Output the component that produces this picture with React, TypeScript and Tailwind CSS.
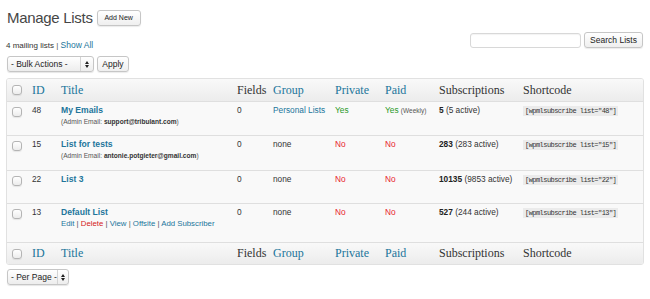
import React from "react";

const sans = "font-['Liberation_Sans',Arial,sans-serif]";
const serif = "font-['Liberation_Serif','Times_New_Roman',serif]";

function Check() {
  return (
    <span className="block w-[10px] h-[10px] rounded-[3px] border border-[#b4b4b4] bg-gradient-to-b from-white to-[#ececec] shadow-[0_1px_1px_rgba(0,0,0,0.08)]" />
  );
}

function SelectBox({ label, width }: { label: string; width: string }) {
  return (
    <div
      className={`${width} h-[16px] flex items-stretch rounded-[3px] border border-[#c6c6c6] bg-gradient-to-b from-white to-[#ededed] shadow-[0_1px_1px_rgba(0,0,0,0.1)] text-[8.5px] text-[#222]`}
    >
      <span className="flex-1 flex items-center pl-[3px] whitespace-nowrap">{label}</span>
      <span className="w-[13px] border-l border-[#d4d4d4] flex flex-col items-center justify-center gap-[1px]">
        <span className="block w-0 h-0 border-l-[2.5px] border-r-[2.5px] border-b-[3px] border-l-transparent border-r-transparent border-b-[#222]" />
        <span className="block w-0 h-0 border-l-[2.5px] border-r-[2.5px] border-t-[3px] border-l-transparent border-r-transparent border-t-[#222]" />
      </span>
    </div>
  );
}

function Btn({ children, className = "" }: { children: React.ReactNode; className?: string }) {
  return (
    <div
      className={`h-[16px] flex items-center justify-center rounded-[3px] border border-[#c6c6c6] bg-gradient-to-b from-white to-[#efefef] shadow-[0_1px_1px_rgba(0,0,0,0.08)] text-[#222] ${className}`}
    >
      {children}
    </div>
  );
}

type Row = {
  id: string;
  title: string;
  sub?: React.ReactNode;
  group: React.ReactNode;
  priv: boolean;
  paid: boolean;
  subs: string;
  active: string;
  code: string;
  h: string;
};

const rows: Row[] = [
  {
    id: "48",
    title: "My Emails",
    sub: (
      <span>
        (Admin Email: <b className="text-[#333]">support@tribulant.com</b>)
      </span>
    ),
    group: <span className="text-[#21759b]">Personal Lists</span>,
    priv: true,
    paid: true,
    subs: "5",
    active: "(5 active)",
    code: '[wpmlsubscribe list="48"]',
    h: "h-[34px]",
  },
  {
    id: "15",
    title: "List for tests",
    sub: (
      <span>
        (Admin Email: <b className="text-[#333]">antonie.potgieter@gmail.com</b>)
      </span>
    ),
    group: "none",
    priv: false,
    paid: false,
    subs: "283",
    active: "(283 active)",
    code: '[wpmlsubscribe list="15"]',
    h: "h-[35px]",
  },
  {
    id: "22",
    title: "List 3",
    group: "none",
    priv: false,
    paid: false,
    subs: "10135",
    active: "(9853 active)",
    code: '[wpmlsubscribe list="22"]',
    h: "h-[33px]",
  },
  {
    id: "13",
    title: "Default List",
    sub: (
      <span className="text-[7.8px] text-[#21759b]">
        Edit <span className="text-[#555]">|</span> <span className="text-[#d42020]">Delete</span>{" "}
        <span className="text-[#555]">|</span> View <span className="text-[#555]">|</span> Offsite{" "}
        <span className="text-[#555]">|</span> Add Subscriber
      </span>
    ),
    group: "none",
    priv: false,
    paid: false,
    subs: "527",
    active: "(244 active)",
    code: '[wpmlsubscribe list="13"]',
    h: "h-[39px]",
  },
];

function HeadRow({ top }: { top: boolean }) {
  const th = "text-left font-normal align-middle pl-[4px] text-[12px] leading-[14px]";
  return (
    <tr
      className={`h-[22px] bg-gradient-to-b from-[#f9f9f9] to-[#ececec] ${serif} ${
        top ? "" : "border-t border-[#dfdfdf]"
      }`}
    >
      <td className="align-middle pl-[5px] pt-[1px]">
        <Check />
      </td>
      <th className={`${th} text-[#21759b]`}>ID</th>
      <th className={`${th} text-[#21759b]`}>Title</th>
      <th className={`${th} text-[#333]`}>Fields</th>
      <th className={`${th} text-[#21759b]`}>Group</th>
      <th className={`${th} text-[#21759b]`}>Private</th>
      <th className={`${th} text-[#21759b]`}>Paid</th>
      <th className={`${th} text-[#333]`}>Subscriptions</th>
      <th className={`${th} text-[#333]`}>Shortcode</th>
    </tr>
  );
}

export default function App() {
  const td = "align-top pl-[4px] pt-[3px] leading-[11px]";
  return (
    <div className={`w-[650px] h-[299px] bg-white overflow-hidden ${sans} text-[#333]`}>
      <div className="flex items-center pl-[7px] pt-[8px]">
        <h1 className="text-[15px] leading-[20px] tracking-[-0.3px] text-[#464646]">Manage Lists</h1>
        <Btn className="ml-[4px] w-[44px] text-[7px] h-[15px]">Add New</Btn>
      </div>
      <div className="flex items-start justify-between pl-[6px] pr-[7px] mt-[4px]">
        <div>
          <div className="text-[8px] mt-[8px] leading-[10px]">
            4 mailing lists <span className="text-[#555]">|</span>{" "}
            <span className="text-[#21759b] text-[8.5px]">Show All</span>
          </div>
          <div className="flex items-center gap-[3px] mt-[5px] ml-[1px]">
            <SelectBox label="- Bulk Actions -" width="w-[87px]" />
            <Btn className="w-[32px] text-[8.5px]">Apply</Btn>
          </div>
        </div>
        <div className="flex items-center gap-[3px]">
          <div className="w-[111px] h-[15px] rounded-[3px] border border-[#d8d8d8] bg-white shadow-[inset_0_1px_1px_rgba(0,0,0,0.05)]" />
          <Btn className="w-[59px] text-[8.5px]">Search Lists</Btn>
        </div>
      </div>
      <div className="mx-[6px] mt-[6px] border border-[#e1e1e1] rounded-[3px] overflow-hidden">
        <table className="w-full table-fixed border-collapse">
          <colgroup>
            <col className="w-[21px]" />
            <col className="w-[29px]" />
            <col className="w-[176px]" />
            <col className="w-[36px]" />
            <col className="w-[62px]" />
            <col className="w-[50px]" />
            <col className="w-[54px]" />
            <col className="w-[84px]" />
            <col />
          </colgroup>
          <thead>
            <HeadRow top />
          </thead>
          <tbody className="text-[8.3px]">
            {rows.map((r) => (
              <tr key={r.id} className={`${r.h} bg-[#f9f9f9] border-t border-[#dfdfdf]`}>
                <td className="align-top pl-[5px] pt-[5px]">
                  <Check />
                </td>
                <td className={td}>{r.id}</td>
                <td className={td}>
                  <div className="font-bold text-[#21759b] text-[8.6px] leading-[11px]">{r.title}</div>
                  {r.sub && (
                    <div className="text-[6.6px] text-[#555] mt-[1px] leading-[10px] whitespace-nowrap">{r.sub}</div>
                  )}
                </td>
                <td className={td}>0</td>
                <td className={`${td} whitespace-nowrap`}>{r.group}</td>
                <td className={td}>
                  {r.priv ? <span className="text-[#2a9a2a]">Yes</span> : <span className="text-[#e8222c]">No</span>}
                </td>
                <td className={`${td} whitespace-nowrap`}>
                  {r.paid ? (
                    <span>
                      <span className="text-[#2a9a2a]">Yes</span>{" "}
                      <span className="text-[6.5px] text-[#555]">(Weekly)</span>
                    </span>
                  ) : (
                    <span className="text-[#e8222c]">No</span>
                  )}
                </td>
                <td className={`${td} whitespace-nowrap`}>
                  <b className="text-[#222]">{r.subs}</b> {r.active}
                </td>
                <td className={td}>
                  <code className="font-['Liberation_Mono','DejaVu_Sans_Mono',monospace] text-[7px] tracking-[-0.55px] text-[#333] bg-[#ebebeb] px-[2px] py-[1px] whitespace-nowrap">
                    {r.code}
                  </code>
                </td>
              </tr>
            ))}
          </tbody>
          <tfoot>
            <HeadRow top={false} />
          </tfoot>
        </table>
      </div>
      <div className="pl-[7px] mt-[4px]">
        <SelectBox label="- Per Page -" width="w-[62px]" />
      </div>
    </div>
  );
}
